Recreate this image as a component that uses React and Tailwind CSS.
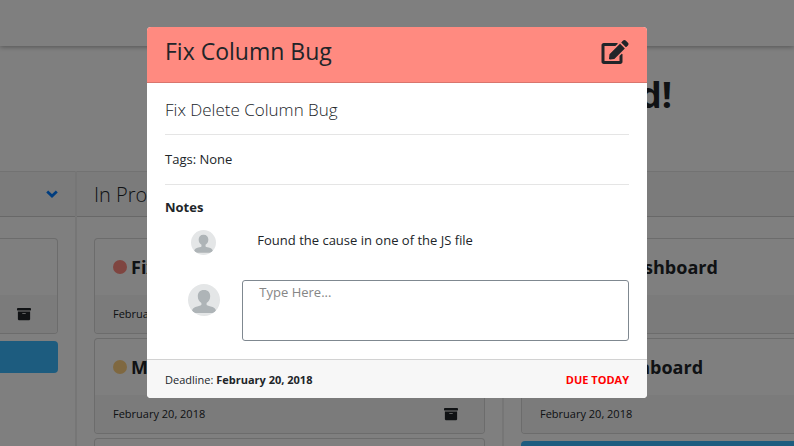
import { FaArchive, FaEdit } from "react-icons/fa";

function Card({ title, dot, date }) {
  return (
    <article className="overflow-hidden rounded border border-black/15 bg-white">
      <h3 className="flex h-14 items-center gap-1 px-[18px] text-lg font-bold whitespace-nowrap">
        {dot && <span className={`size-3.5 shrink-0 rounded-full ${dot}`} />}
        {title}
      </h3>
      <div className="flex h-[38px] items-center justify-between bg-[#f7f7f7] pr-[26px] pl-[18px] text-[11px]">
        <span>{date}</span>
        <button type="button" aria-label="Archive card">
          <FaArchive className="size-3.5" />
        </button>
      </div>
    </article>
  );
}

function Column({ title, children }) {
  return (
    <section className="w-[427px] shrink-0 border-r-2 border-black/7">
      <header className="flex h-[46px] items-center justify-between border-t border-b border-t-black/7 border-b-black/15 bg-[#f7f7f7] px-[17px]">
        <h2 className="pt-0.5 text-xl font-light">{title}</h2>
        <button type="button" aria-label="Column menu" className="text-[#007bff]">
          <svg viewBox="0 0 12 8" className="h-2 w-3" fill="none" stroke="currentColor" strokeWidth="2.8">
            <path d="M1.200 1.500 6 6l4.800-4.500" />
          </svg>
        </button>
      </header>
      <div className="flex flex-col gap-1 px-[17px] pt-[21px]">{children}</div>
    </section>
  );
}

function AddButton() {
  return <button type="button" aria-label="Add card" className="mt-[3px] h-8 rounded bg-[#3ab9ff]" />;
}

function Avatar({ size }) {
  return (
    <svg viewBox="0 0 32 32" className={`${size} rounded-full`} role="img" aria-label="User">
      <rect width="32" height="32" fill="#e4e6e7" />
      <path
        fill="#aeb4b7"
        d="M16 6c4.200 0 6.200 2.700 6.200 6.300 0 3-1.400 5.500-3.600 6.700v2c1 .8 3.500 1 6 2 2 .9 3 2.200 3.400 3.700-1 1.300-2.300 2.300-3.500 2.300h-17c-1.200 0-2.500-1-3.500-2.300.4-1.500 1.400-2.800 3.400-3.700 2.500-1 5-1.200 6-2v-2c-2.200-1.200-3.600-3.700-3.600-6.700C9.800 8.700 11.800 6 16 6z"
      />
    </svg>
  );
}

function CardDialog() {
  return (
    <div
      role="dialog"
      aria-labelledby="dialog-title"
      className="w-full max-w-[500px] self-start overflow-hidden rounded bg-white"
    >
      <header className="flex h-14 items-center justify-between border-b border-black/15 bg-[#ff8a80] px-[18px] pb-1.5">
        <h2 id="dialog-title" className="text-[23px]">
          Fix Column Bug
        </h2>
        <button type="button" aria-label="Edit card">
          <FaEdit className="h-6 w-7" />
        </button>
      </header>
      <div className="px-[18px] pb-[18px]">
        <p className="pt-[13px] pb-2.5 text-[17px] leading-7 font-light">Fix Delete Column Bug</p>
        <hr className="border-black/10" />
        <p className="py-3.5 text-[13px] leading-[21px]">Tags: None</p>
        <hr className="border-black/10" />
        <h3 className="pt-3 pb-1 text-[13px] leading-5 font-bold">Notes</h3>
        <div className="mt-[9px] grid grid-cols-[1fr_5fr] items-start">
          <div className="flex justify-center">
            <Avatar size="size-[25px]" />
          </div>
          <p className="px-[15px] text-[13px] leading-5">Found the cause in one of the JS file</p>
        </div>
        <div className="mt-[25px] grid grid-cols-[1fr_5fr] items-start">
          <div className="flex justify-center pt-1">
            <Avatar size="size-8" />
          </div>
          <textarea
            aria-label="New note"
            placeholder="Type Here..."
            className="block h-[61px] w-full resize-none rounded-[3px] border border-[#7f8890] px-4 py-px text-[13px] leading-5 placeholder:text-[#868686]"
          />
        </div>
      </div>
      <footer className="flex h-[39px] items-center justify-between border-t border-black/15 bg-[#f7f7f7] px-[18px] pt-0.5 text-[11px]">
        <p>
          Deadline: <strong>February 20, 2018</strong>
        </p>
        <strong className="text-[#ff0000]">DUE TODAY</strong>
      </footer>
    </div>
  );
}

export default function App() {
  return (
    <div className="relative h-screen overflow-hidden bg-white font-['Open_Sans','Noto_Sans',sans-serif] text-[#212529]">
      <nav className="h-[46px] shadow-[0_1px_5px_rgba(0,0,0,0.35)]" />
      <h1 className="pt-[22px] pr-[122px] text-right text-4xl leading-[54px] font-bold">Dashboard!</h1>
      <main className="mt-[49px] -ml-[350px] flex">
        <Column title="">
          <Card date="" />
          <AddButton />
        </Column>
        <Column title="In Progress">
          <Card title="Fix Column Bug" dot="bg-[#ff8a80]" date="February 20, 2018" />
          <Card title="Modal" dot="bg-[#ffd180]" date="February 20, 2018" />
          <Card date="" />
        </Column>
        <Column title="">
          <Card title="Improve Dashboard" date="" />
          <Card title="Design Dashboard" date="February 20, 2018" />
          <AddButton />
        </Column>
      </main>
      <div className="absolute inset-0 flex justify-center bg-black/50 pt-[27px]">
        <CardDialog />
      </div>
    </div>
  );
}
